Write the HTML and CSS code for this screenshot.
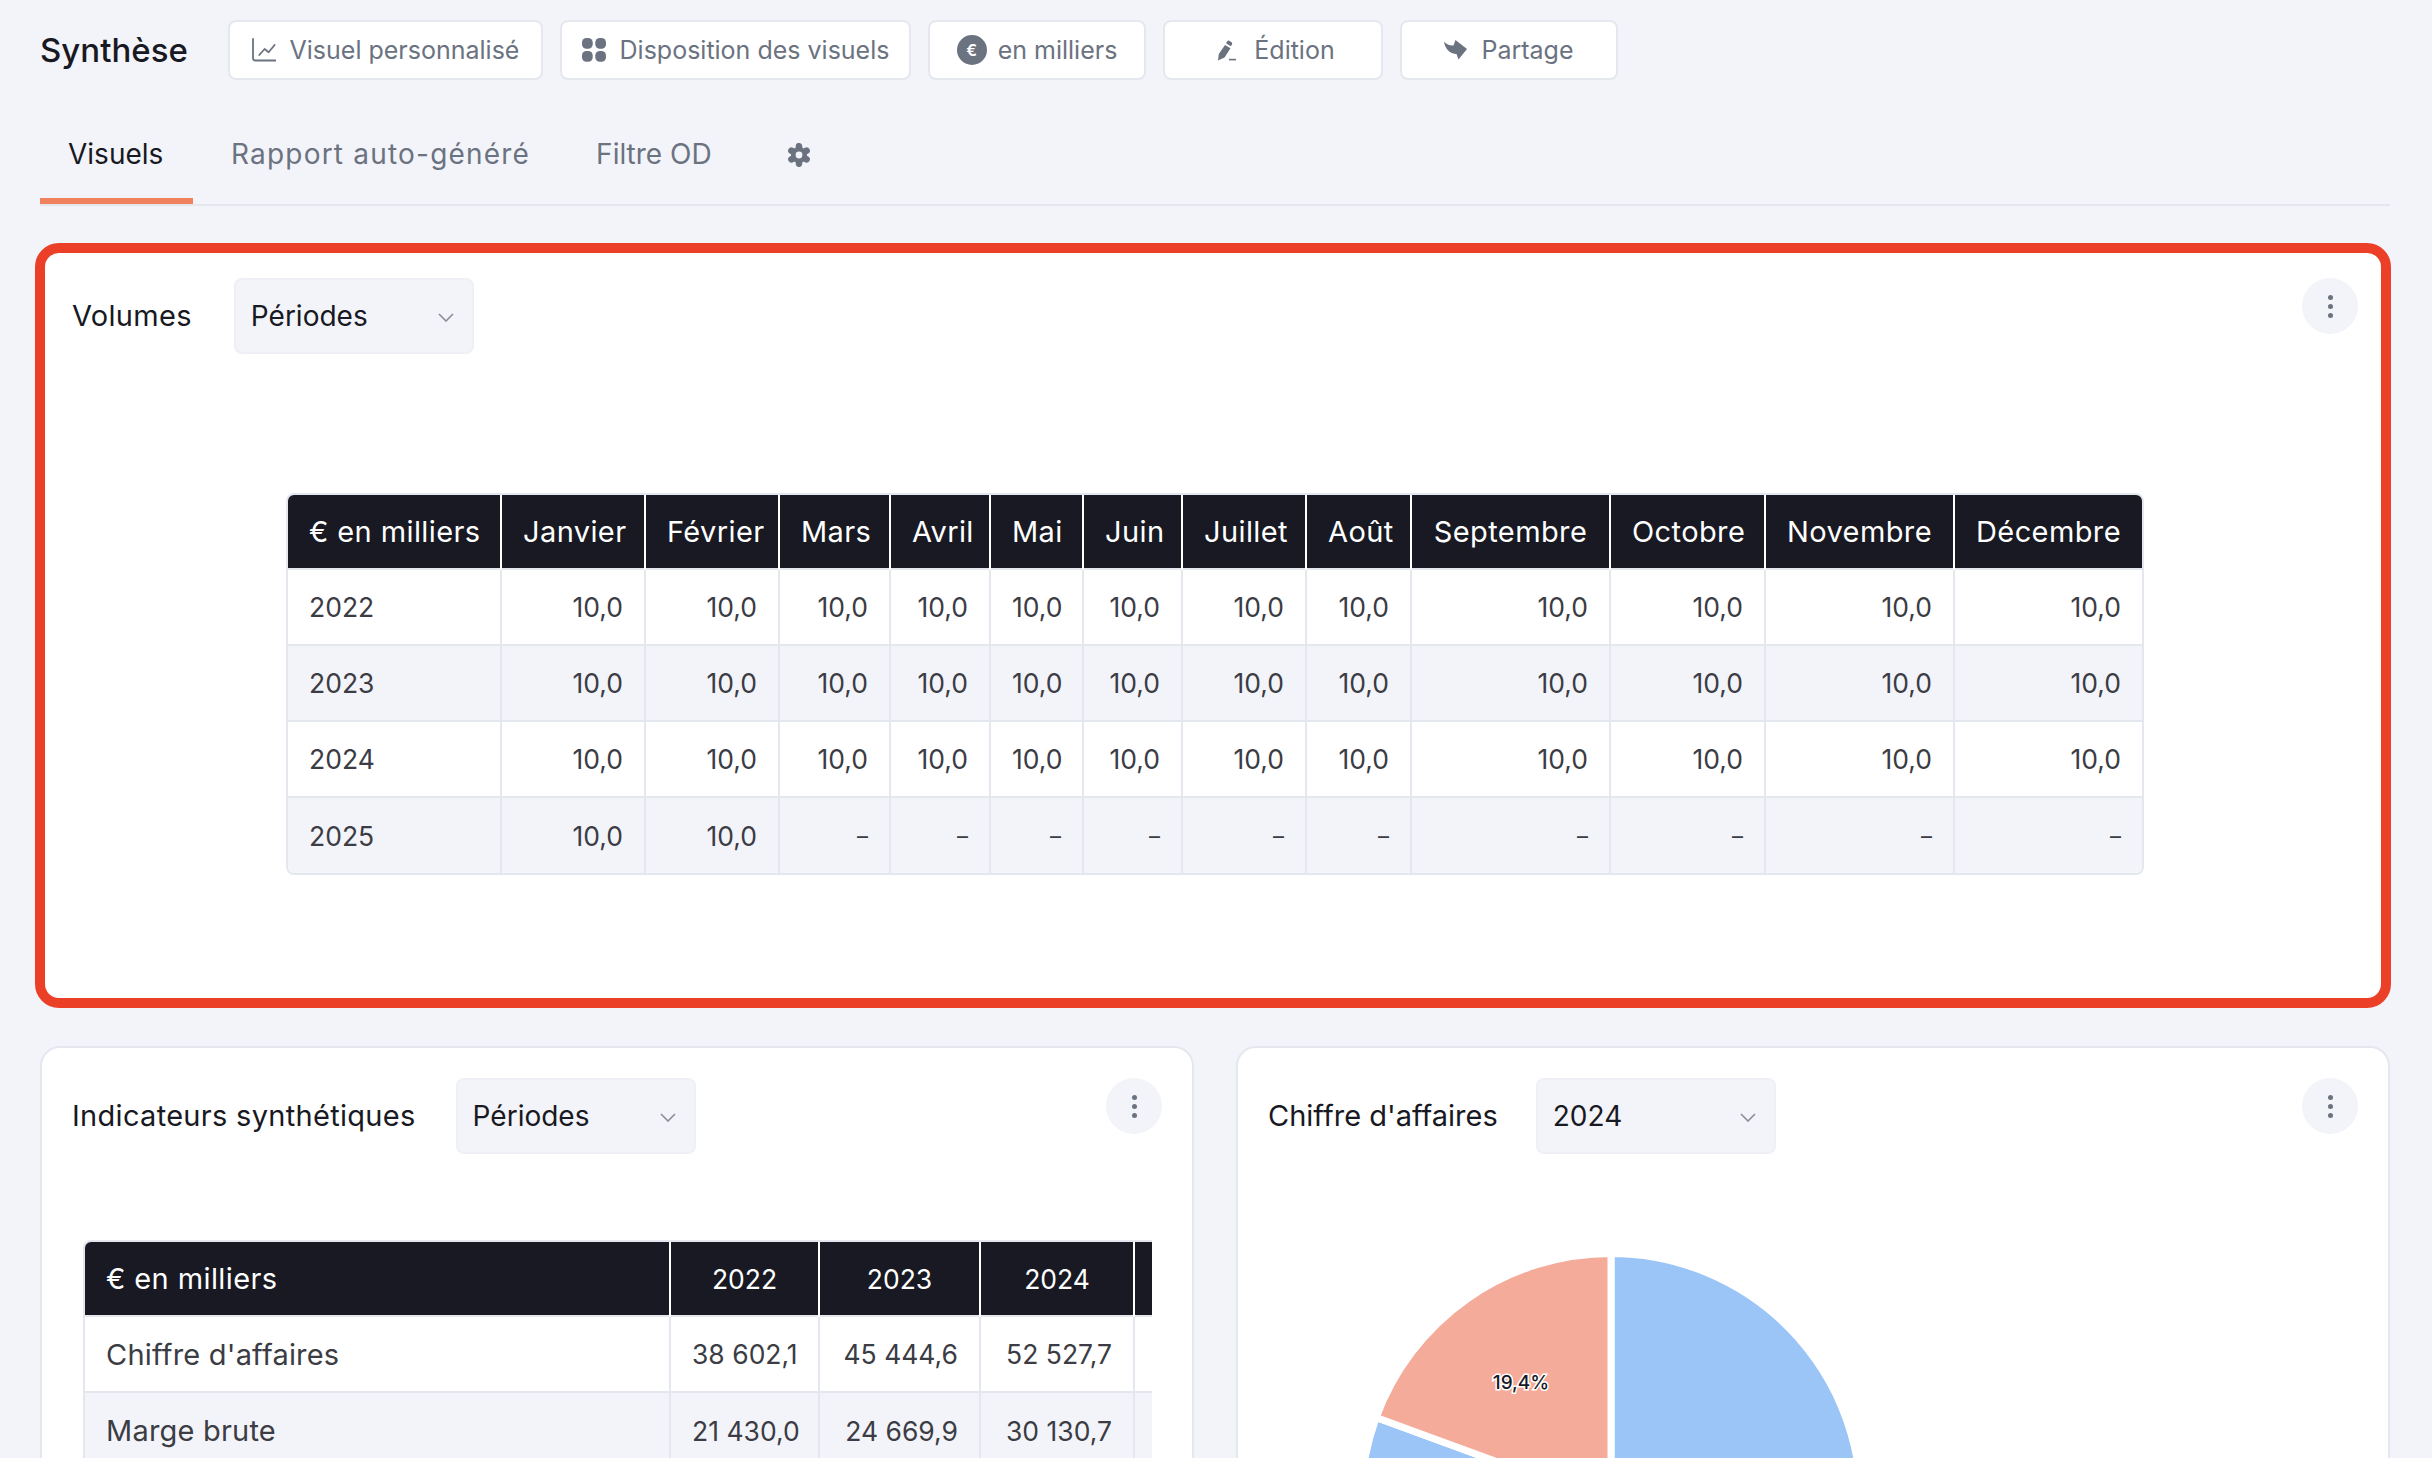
FILE: index.html
```html
<!DOCTYPE html>
<html lang="fr">
  <head>
    <meta charset="UTF-8" />
    <title>Synthèse</title>
    <link rel="stylesheet" href="styles.css">
  </head>
  <body>
    <header class="toolbar">
      <h1 class="page-title">Synthèse</h1>
      <a class="btn btn-custom" href="#">
        <svg class="icon" viewBox="0 0 24 24"><path d="M1 1v19q0 2.500 2.500 2.500H24M7.300 17l5.300-6 4 3.300 6-7.300" fill="none" stroke="#6b7280" stroke-width="1.800" stroke-linecap="round" stroke-linejoin="round"/></svg>
        Visuel personnalisé
      </a>
      <a class="btn btn-layout" href="#">
        <svg class="icon" viewBox="0 0 24 24"><g fill="#6b7280"><rect x="0" y="0" width="10.700" height="10.700" rx="4.500"/><rect x="13.300" y="0" width="10.700" height="10.700" rx="4.500"/><rect x="0" y="13" width="10.700" height="10.700" rx="4.500"/><rect x="13.300" y="13" width="10.700" height="10.700" rx="4.500"/></g></svg>
        Disposition des visuels
      </a>
      <a class="btn btn-unit" href="#">
        <span class="euro-badge">€</span>
        en milliers
      </a>
      <a class="btn btn-edit" href="#">
        <svg class="icon icon-edit" viewBox="0 0 20 21"><g fill="#6b7280"><path d="M1 20.500l.8-6.500L8 5l5.500 3.200-6 9.300z"/><path d="M9 3.200l1.200-2q.8-1 2-.4l2.400 1.400q1 .7.4 2l-1.200 2z"/><rect x="12" y="18.800" width="7" height="1.600"/></g></svg>
        Édition
      </a>
      <a class="btn btn-share" href="#">
        <svg class="icon icon-share" viewBox="0 0 23 20"><path d="M0 1.500C3 5 6 5.500 9.500 5.500L11.500 0 23 9 14.500 19.500 12.500 14C6 14 1 9 0 1.500z" fill="#6b7280"/></svg>
        Partage
      </a>
    </header>

    <nav class="tabs">
      <a class="tab active" href="#">Visuels</a>
      <a class="tab tab-wide" href="#">Rapport auto-généré</a>
      <a class="tab" href="#">Filtre OD</a>
      <a class="tab tab-gear" href="#">
        <svg class="gear" viewBox="-12 -12 24 24">
          <g stroke="#6b7280" stroke-width="6.500" stroke-linecap="round">
            <path d="M0 -8.800V8.800"/>
            <path d="M-7.600 -4.400L7.600 4.400"/>
            <path d="M-7.600 4.400L7.600 -4.400"/>
          </g>
          <circle r="8" fill="#6b7280"/>
          <circle r="3.400" fill="#f3f4f9"/>
        </svg>
      </a>
    </nav>

    <section class="card card-highlight">
      <div class="card-head">
        <span class="card-title">Volumes</span>
        <div class="select">
          Périodes
          <svg class="chevron" viewBox="0 0 16 9"><path d="M1 1l7 7 7-7" fill="none" stroke="#8a8d96" stroke-width="1.600"/></svg>
        </div>
        <button class="kebab"><i></i><i></i><i></i></button>
      </div>
      <div class="table-wrap table-volumes">
        <table class="data-table">
          <colgroup>
            <col width="213"><col width="144"><col width="134"><col width="111"><col width="100"><col width="93"><col width="99"><col width="124"><col width="105"><col width="199"><col width="155"><col width="189"><col width="188">
          </colgroup>
          <thead>
            <tr><th class="first">€ en milliers</th><th>Janvier</th><th>Février</th><th>Mars</th><th>Avril</th><th>Mai</th><th>Juin</th><th>Juillet</th><th>Août</th><th>Septembre</th><th>Octobre</th><th>Novembre</th><th>Décembre</th></tr>
          </thead>
          <tbody>
            <tr><td class="first">2022</td><td>10,0</td><td>10,0</td><td>10,0</td><td>10,0</td><td>10,0</td><td>10,0</td><td>10,0</td><td>10,0</td><td>10,0</td><td>10,0</td><td>10,0</td><td>10,0</td></tr>
            <tr><td class="first">2023</td><td>10,0</td><td>10,0</td><td>10,0</td><td>10,0</td><td>10,0</td><td>10,0</td><td>10,0</td><td>10,0</td><td>10,0</td><td>10,0</td><td>10,0</td><td>10,0</td></tr>
            <tr><td class="first">2024</td><td>10,0</td><td>10,0</td><td>10,0</td><td>10,0</td><td>10,0</td><td>10,0</td><td>10,0</td><td>10,0</td><td>10,0</td><td>10,0</td><td>10,0</td><td>10,0</td></tr>
            <tr><td class="first">2025</td><td>10,0</td><td>10,0</td><td class="dash">–</td><td class="dash">–</td><td class="dash">–</td><td class="dash">–</td><td class="dash">–</td><td class="dash">–</td><td class="dash">–</td><td class="dash">–</td><td class="dash">–</td><td class="dash">–</td></tr>
          </tbody>
        </table>
      </div>
    </section>

    <div class="card-row">
      <section class="card">
        <div class="card-head">
          <span class="card-title">Indicateurs synthétiques</span>
          <div class="select">
            Périodes
            <svg class="chevron" viewBox="0 0 16 9"><path d="M1 1l7 7 7-7" fill="none" stroke="#8a8d96" stroke-width="1.600"/></svg>
          </div>
          <button class="kebab"><i></i><i></i><i></i></button>
        </div>
        <div class="table-wrap table-indicators">
          <table class="data-table">
            <colgroup>
              <col width="585"><col width="149"><col width="161"><col width="154"><col width="154">
            </colgroup>
            <thead>
              <tr><th class="first">€ en milliers</th><th>2022</th><th>2023</th><th>2024</th><th></th></tr>
            </thead>
            <tbody>
              <tr><td class="first label">Chiffre d'affaires</td><td>38 602,1</td><td>45 444,6</td><td>52 527,7</td><td></td></tr>
              <tr class="even"><td class="first label">Marge brute</td><td>21 430,0</td><td>24 669,9</td><td>30 130,7</td><td></td></tr>
            </tbody>
          </table>
        </div>
      </section>

      <section class="card card-pie">
        <div class="card-head">
          <span class="card-title">Chiffre d'affaires</span>
          <div class="select">
            2024
            <svg class="chevron" viewBox="0 0 16 9"><path d="M1 1l7 7 7-7" fill="none" stroke="#8a8d96" stroke-width="1.600"/></svg>
          </div>
          <button class="kebab"><i></i><i></i><i></i></button>
        </div>
        <svg class="pie" viewBox="0 0 1150 500">
          <g transform="translate(373 253.500)" stroke="#fff" stroke-width="7" stroke-linejoin="round">
            <path fill="#9bc5f7" d="M0 0V-250A250 250 0 1 1 -234.800 -86Z"/>
            <path fill="#f4ab9a" d="M0 0L-234.800 -86A250 250 0 0 1 0 -250Z"/>
          </g>
          <text class="pie-label" x="283" y="139" text-anchor="middle">19,4%</text>
        </svg>
      </section>
    </div>
  </body>
</html>
```

FILE: styles.css
```css
/* reset */
html,
body {
  margin: 0;
  padding: 0;
  height: 1458px;
  overflow: hidden;
}

body {
  background-color: #f3f4f9;
  padding: 0 42px 0 40px;
  font-family: Inter, "Liberation Sans", sans-serif;
  font-size: 26.5px;
  color: #181922;
}

a {
  text-decoration: none;
  color: inherit;
}

/* top bar */
.toolbar {
  display: flex;
  align-items: center;
  height: 60px;
  padding-top: 20px;
}

.page-title {
  width: 188px;
  margin: 0;
  font-size: 33px;
  font-weight: 500;
}

.btn {
  box-sizing: border-box;
  display: flex;
  align-items: center;
  justify-content: center;
  height: 60px;
  margin-right: 17px;
  background-color: #fff;
  border: 2px solid #e5e7ef;
  border-radius: 8px;
  color: #6b7280;
  font-size: 25px;
}

.btn-custom {
  width: 315px;
}

.btn-layout {
  width: 351px;
}

.btn-unit {
  width: 218px;
}

.btn-edit {
  width: 220px;
  padding-left: 6px;
}

.btn-share {
  width: 218px;
}

.icon {
  width: 24px;
  height: 24px;
  margin-right: 14px;
  flex: none;
}

.icon-edit {
  width: 20px;
  height: 21px;
  margin-right: 17px;
}

.icon-share {
  width: 23px;
  height: 20px;
}

.euro-badge {
  width: 30px;
  height: 30px;
  margin-right: 11px;
  border-radius: 50%;
  background-color: #6b7280;
  color: #fff;
  font-size: 16px;
  font-weight: 600;
  line-height: 30px;
  text-align: center;
}

/* tabs */
.tabs {
  display: flex;
  height: 68px;
  margin-top: 56px;
  border-bottom: 2px solid #e5e7ef;
}

.tab {
  box-sizing: border-box;
  height: 68px;
  padding: 0 28px;
  margin-right: 10px;
  line-height: 36px;
  color: #6b7280;
  font-size: 28px;
}

.tab.active {
  width: 153px;
  color: #181922;
  border-bottom: 6px solid #f0825f;
}

.tab-wide {
  letter-spacing: 1.2px;
}

.tab-gear {
  padding-left: 37px;
}

.gear {
  width: 24px;
  height: 24px;
  margin-top: 7px;
}

/* cards */
.card {
  box-sizing: border-box;
  background-color: #fff;
  border: 2px solid #e5e7ef;
  border-radius: 20px;
  padding: 30px 30px 0;
  flex: 1;
  min-width: 0;
}

.card-highlight {
  height: 765px;
  margin: 37px -1px 38px -5px;
  padding: 25px 23px 0 27px;
  border: 10px solid #eb4027;
  border-radius: 24px;
}

.card-row {
  display: flex;
  gap: 42px;
}

.card-head {
  display: flex;
  align-items: center;
  height: 76px;
}

.card-title {
  margin-right: 40px;
  padding-bottom: 2px;
  font-size: 29px;
  letter-spacing: .3px;
}

.card-highlight .card-title {
  margin-right: 42px;
}

.card-pie .card-title {
  margin-right: 38px;
  letter-spacing: 0;
}

.select {
  box-sizing: border-box;
  display: flex;
  align-items: center;
  justify-content: space-between;
  width: 240px;
  height: 76px;
  padding: 0 18px 0 15px;
  background-color: #f3f4f9;
  border: 2px solid #eff0f5;
  border-radius: 8px;
  font-size: 28px;
}

.chevron {
  width: 16px;
  height: 9px;
  margin-top: 2px;
}

.kebab {
  display: flex;
  flex-direction: column;
  align-items: center;
  justify-content: center;
  gap: 4px;
  width: 56px;
  height: 56px;
  margin: -20px 0 0 auto;
  padding: 0;
  border: 0;
  border-radius: 50%;
  background-color: #f3f4f9;
}

.kebab i {
  width: 5px;
  height: 5px;
  border-radius: 50%;
  background-color: #6b7280;
}

/* tables */
.table-wrap {
  overflow: hidden;
  border: 2px solid #e5e7ef;
  border-radius: 8px;
}

.table-volumes {
  width: 1854px;
  margin: 139px 0 0 214px;
}

.table-indicators {
  width: 1067px;
  margin: 86px 0 0 11px;
  border-right: 0;
  border-radius: 8px 0 0 0;
}

.data-table {
  table-layout: fixed;
  width: 100%;
  border-collapse: collapse;
}

.table-indicators .data-table {
  width: 1203px;
}

.data-table th,
.data-table td {
  box-sizing: border-box;
  height: 76px;
  padding: 0 21px;
  font-weight: 400;
  text-align: right;
  white-space: nowrap;
}

.data-table th {
  height: 74px;
  background-color: #181922;
  color: #fff;
  border-left: 2px solid #fff;
  text-align: center;
}

.table-volumes th,
.data-table th.first {
  font-size: 29px;
  letter-spacing: .4px;
}

.data-table td.label {
  font-size: 29px;
  letter-spacing: .2px;
}

.data-table td {
  border-top: 2px solid #e5e7ef;
  border-left: 2px solid #e5e7ef;
  color: #3b3c44;
}

.data-table td.dash {
  font-size: 22px;
}

.data-table th.first,
.data-table td.first {
  border-left: 0;
  text-align: left;
}

.table-volumes tbody tr:nth-child(even) td,
.data-table tr.even td {
  background-color: #f3f4f9;
}

/* pie */
.pie {
  display: block;
  width: 1150px;
  height: 500px;
  margin: 96px 0 0 -30px;
}

.pie-label {
  font-family: Inter, "Liberation Sans", sans-serif;
  font-size: 19px;
  font-weight: 500;
  fill: #181922;
  stroke: #fff;
  stroke-width: 3px;
  paint-order: stroke;
}
```
